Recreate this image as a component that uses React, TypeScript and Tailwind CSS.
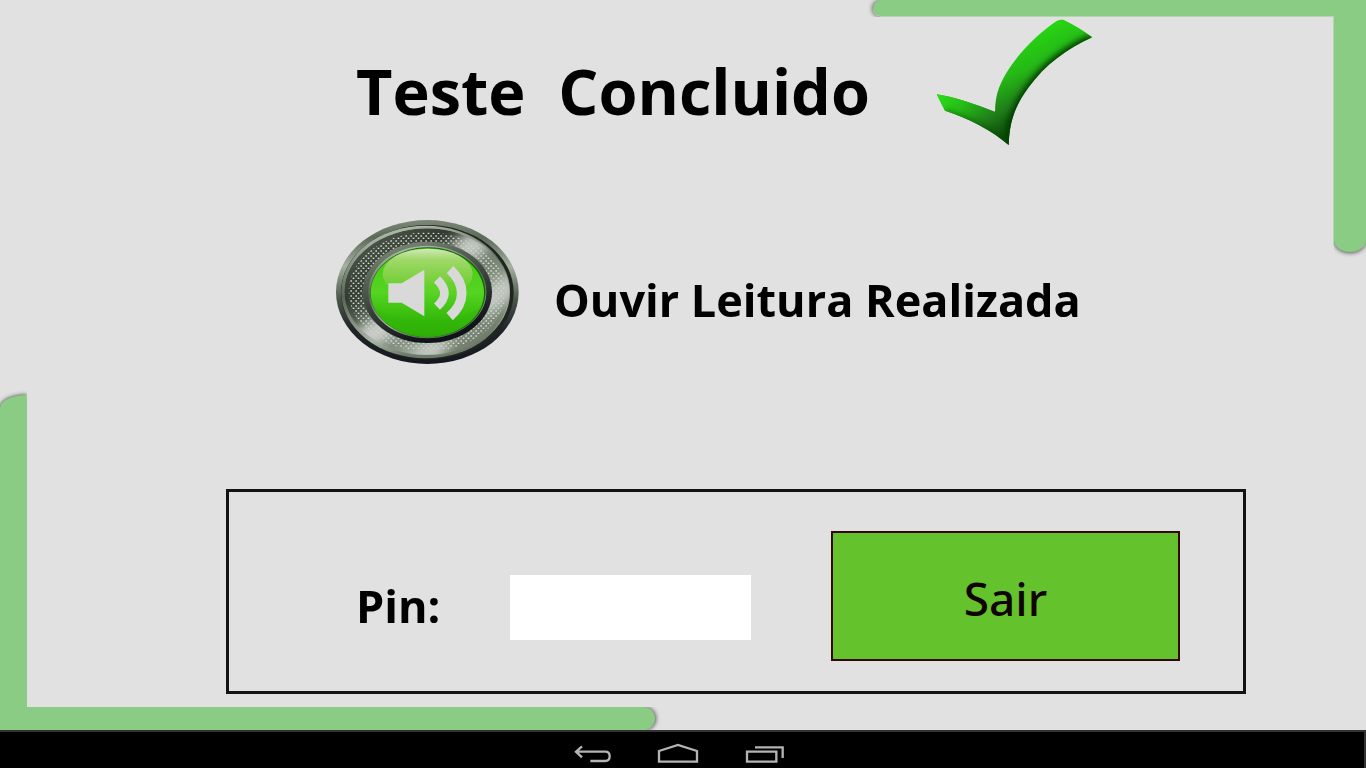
function CheckMark() {
  return (
    <svg className="h-[127px] w-[157px] shrink-0" viewBox="48 27 471 381" aria-hidden="true">
      <defs>
        <linearGradient id="tick" gradientUnits="userSpaceOnUse" x1="210" y1="130" x2="330" y2="390">
          <stop offset="0" stopColor="#27d413" />
          <stop offset="0.3" stopColor="#25b916" />
          <stop offset="0.6" stopColor="#1f7d18" />
          <stop offset="0.85" stopColor="#0d4d09" />
          <stop offset="1" stopColor="#083f05" />
        </linearGradient>
        <linearGradient id="tickArm" gradientUnits="userSpaceOnUse" x1="60" y1="240" x2="215" y2="360">
          <stop offset="0" stopColor="#2be016" />
          <stop offset="0.4" stopColor="#27bd17" />
          <stop offset="1" stopColor="#1f7d18" stopOpacity="0" />
        </linearGradient>
        <filter id="tickBlur" x="-20%" y="-20%" width="140%" height="140%">
          <feGaussianBlur stdDeviation="10" />
        </filter>
        <clipPath id="tickClip">
          <path d="M50 253C105 261 168 284 225 305C226 250 240 218 270 172C303 122 358 68 410 33Q420 27 430 29Q475 50 517 82C440 116 375 165 326 232C285 288 268 335 266 405C215 361 145 325 75 302Z" />
        </clipPath>
      </defs>
      <g clipPath="url(#tickClip)">
        <rect x="48" y="27" width="471" height="381" fill="url(#tick)" />
        <rect x="48" y="240" width="177" height="168" fill="url(#tickArm)" />
        <path d="M520 85C440 119 378 168 329 235C288 291 271 335 268 410" fill="none" stroke="#053b03" strokeWidth="28" filter="url(#tickBlur)" />
        <path d="M75 306C145 329 215 365 266 409L264 330" fill="none" stroke="#0c4a08" strokeWidth="10" filter="url(#tickBlur)" />
      </g>
    </svg>
  );
}

function SpeakerArt() {
  return (
    <svg className="h-[145px] w-[185px]" viewBox="30 27 555 435" aria-hidden="true">
      <defs>
        <linearGradient id="rim" x1="0" y1="0" x2="0" y2="1">
          <stop offset="0" stopColor="#7c8978" />
          <stop offset="0.12" stopColor="#5c6a58" />
          <stop offset="0.32" stopColor="#a5b09f" />
          <stop offset="0.55" stopColor="#4b5549" />
          <stop offset="0.76" stopColor="#20242a" />
          <stop offset="1" stopColor="#14171f" />
        </linearGradient>
        <linearGradient id="bevel" x1="0" y1="0" x2="0.3" y2="1">
          <stop offset="0" stopColor="#c6cfc3" />
          <stop offset="0.5" stopColor="#5a6557" />
          <stop offset="0.85" stopColor="#a9b3a6" />
          <stop offset="1" stopColor="#6d7969" />
        </linearGradient>
        <linearGradient id="steel" x1="0.12" y1="0.1" x2="0.85" y2="0.9">
          <stop offset="0" stopColor="#4c5748" />
          <stop offset="0.25" stopColor="#343b32" />
          <stop offset="0.5" stopColor="#6c7968" />
          <stop offset="0.75" stopColor="#8c9888" />
          <stop offset="1" stopColor="#6c7868" />
        </linearGradient>
        <linearGradient id="hub" x1="0" y1="0" x2="0.4" y2="1">
          <stop offset="0" stopColor="#8a9585" />
          <stop offset="0.3" stopColor="#5c6959" />
          <stop offset="0.6" stopColor="#39423b" />
          <stop offset="1" stopColor="#10131a" />
        </linearGradient>
        <linearGradient id="lime" x1="0" y1="0" x2="0" y2="1">
          <stop offset="0" stopColor="#48c914" />
          <stop offset="0.5" stopColor="#55d421" />
          <stop offset="0.8" stopColor="#35b90a" />
          <stop offset="1" stopColor="#2ba905" />
        </linearGradient>
        <linearGradient id="gloss" x1="0" y1="0" x2="0" y2="1">
          <stop offset="0" stopColor="#d2e8ba" />
          <stop offset="0.2" stopColor="#a3d96c" />
          <stop offset="0.6" stopColor="#80d143" stopOpacity="0.9" />
          <stop offset="1" stopColor="#55d421" stopOpacity="0" />
        </linearGradient>
        <pattern id="mesh" width="15" height="15" patternUnits="userSpaceOnUse">
          <rect x="1" y="1" width="5" height="4" fill="#d8ded6" />
          <rect x="8" y="8" width="5" height="4" fill="#d8ded6" />
        </pattern>
        <filter id="soft" x="-50%" y="-50%" width="200%" height="200%">
          <feGaussianBlur stdDeviation="18" />
        </filter>
        <clipPath id="ringClip">
          <ellipse cx="306" cy="245" rx="248" ry="190" />
        </clipPath>
      </defs>
      <ellipse cx="307" cy="246" rx="274" ry="216" fill="url(#rim)" />
      <ellipse cx="307" cy="247" rx="259" ry="202" fill="#20251f" />
      <ellipse cx="302" cy="246" rx="253" ry="199" fill="url(#bevel)" />
      <g clipPath="url(#ringClip)">
        <ellipse cx="306" cy="245" rx="248" ry="190" fill="url(#steel)" />
        <ellipse cx="306" cy="245" rx="235" ry="178" fill="url(#mesh)" />
        <g fill="#ccd1cb" filter="url(#soft)">
          <path d="M370 120L435 60L510 95L430 165Z" opacity="0.9" />
          <path d="M470 245L570 180L575 260L470 325Z" opacity="0.85" />
          <path d="M190 300L70 375L125 430L240 350Z" opacity="0.95" />
          <path d="M310 385L220 460L330 470L385 385Z" opacity="0.85" />
        </g>
      </g>
      <ellipse cx="307" cy="247" rx="194" ry="152" fill="url(#hub)" />
      <ellipse cx="307" cy="246" rx="177" ry="139" fill="url(#bevel)" />
      <ellipse cx="309" cy="247" rx="173" ry="135" fill="#176a09" />
      <ellipse cx="307" cy="248" rx="170" ry="133" fill="url(#lime)" />
      <path d="M142 280C175 350 440 350 472 280C450 347 380 378 307 378S165 347 142 280Z" fill="#33b70a" opacity="0.4" />
      <ellipse cx="308" cy="192" rx="135" ry="76" fill="url(#gloss)" />
      <path d="M190 220H230L298 179V319L230 278H190Z" fill="#d9d9d9" />
      <g fill="none" stroke="#d9d9d9">
        <path d="M336 208C366 238 366 262 336 290" strokeWidth="26" />
        <path d="M375 179C422 222 422 278 374 320" strokeWidth="29" />
      </g>
    </svg>
  );
}

function CornerFrame() {
  return (
    <div aria-hidden="true" className="pointer-events-none absolute inset-0 overflow-hidden">
      <div className="absolute top-0 right-0 h-[17px] w-[501px] overflow-hidden pl-2">
        <div className="h-full rounded-l-full border-b border-[#b3d7b1] bg-[#8acc84] shadow-[-1px_0_4px_0_#666]" />
      </div>
      <div className="absolute top-0 right-0 h-[260px] w-8 overflow-hidden pb-2">
        <div className="h-full rounded-b-[16px_12px] bg-[#8acc84] shadow-[0_1px_4px_0_#555]" />
      </div>
      <div className="absolute top-4 right-8 h-[230px] w-px bg-[#b3d7b1]" />
      <div className="absolute bottom-0 left-0 h-[343px] w-[27px] overflow-hidden pt-2">
        <div className="h-full rounded-tl-[27px_13px] bg-[#8acc84] shadow-[0_0_4px_0_#333]" />
      </div>
      <div className="absolute bottom-0 left-0 h-[23px] w-[663px] overflow-hidden pr-2">
        <div className="h-full rounded-r-full bg-[#8acc84] shadow-[1px_0_4px_0_#555]" />
      </div>
    </div>
  );
}

function NavigationBar() {
  const art = "h-5 w-10 overflow-visible fill-none stroke-[#b4b4b4] stroke-[7]";
  return (
    <nav className="flex h-[38px] items-end justify-center gap-[46px] border-t-2 border-r-2 border-t-[#333] border-r-[#333] bg-black pr-1.5 pb-1">
      <button type="button" aria-label="Voltar">
        <svg className={art} viewBox="39 132 120 60">
          <path d="M50 155H136Q149 155 149 169Q149 183 136 183H91M66 139L48 155L66 172" />
        </svg>
      </button>
      <button type="button" aria-label="Início">
        <svg className={art} viewBox="297 132 120 60">
          <path d="M297 185V153L354 135L411 153V185Z" />
        </svg>
      </button>
      <button type="button" aria-label="Recentes">
        <svg className={art} viewBox="555 132 120 60">
          <path d="M561 155H649V185H561ZM585 142H668V174" />
        </svg>
      </button>
    </nav>
  );
}

export default function App() {
  return (
    <div className="flex min-h-screen flex-col bg-[#e1e1e1] font-['Open_Sans','Noto_Sans',sans-serif] text-black">
      <main className="relative grow pt-[19px] pr-[120px] pb-9 pl-[226px]">
        <CornerFrame />
        <header className="flex items-center pl-[130px]">
          <h1 className="w-[580px] pt-4 text-[63px] leading-[90px] font-bold whitespace-pre">Teste  Concluido</h1>
          <CheckMark />
        </header>
        <section className="mt-[73px] flex items-center gap-[34px] pl-[109px]">
          <button type="button" id="play" aria-labelledby="play-label" className="shrink-0 rounded-full">
            <SpeakerArt />
          </button>
          <h2 id="play-label" className="pt-4 text-[45px] leading-[64px] font-bold whitespace-nowrap">Ouvir Leitura Realizada</h2>
        </section>
        <form
          className="mt-[125px] flex items-end border-[3px] border-[#111411] pt-[39px] pr-[63px] pb-[30px] pl-[127px]"
          onSubmit={(event) => event.preventDefault()}
        >
          <div className="mr-20 mb-[21px] flex grow items-center">
            <label htmlFor="pin" className="w-[154px] pb-1 text-[45px] leading-[60px] font-bold">Pin:</label>
            <input id="pin" type="password" className="h-[65px] w-0 grow bg-white px-3 text-4xl outline-none" />
          </div>
          <button type="submit" className="h-[130px] w-[349px] shrink-0 border-2 border-[#330808] bg-[#64c22d] pt-1 font-['Noto_Sans'] text-[46px] font-medium text-[#120303]">
            Sair
          </button>
        </form>
      </main>
      <NavigationBar />
    </div>
  );
}
